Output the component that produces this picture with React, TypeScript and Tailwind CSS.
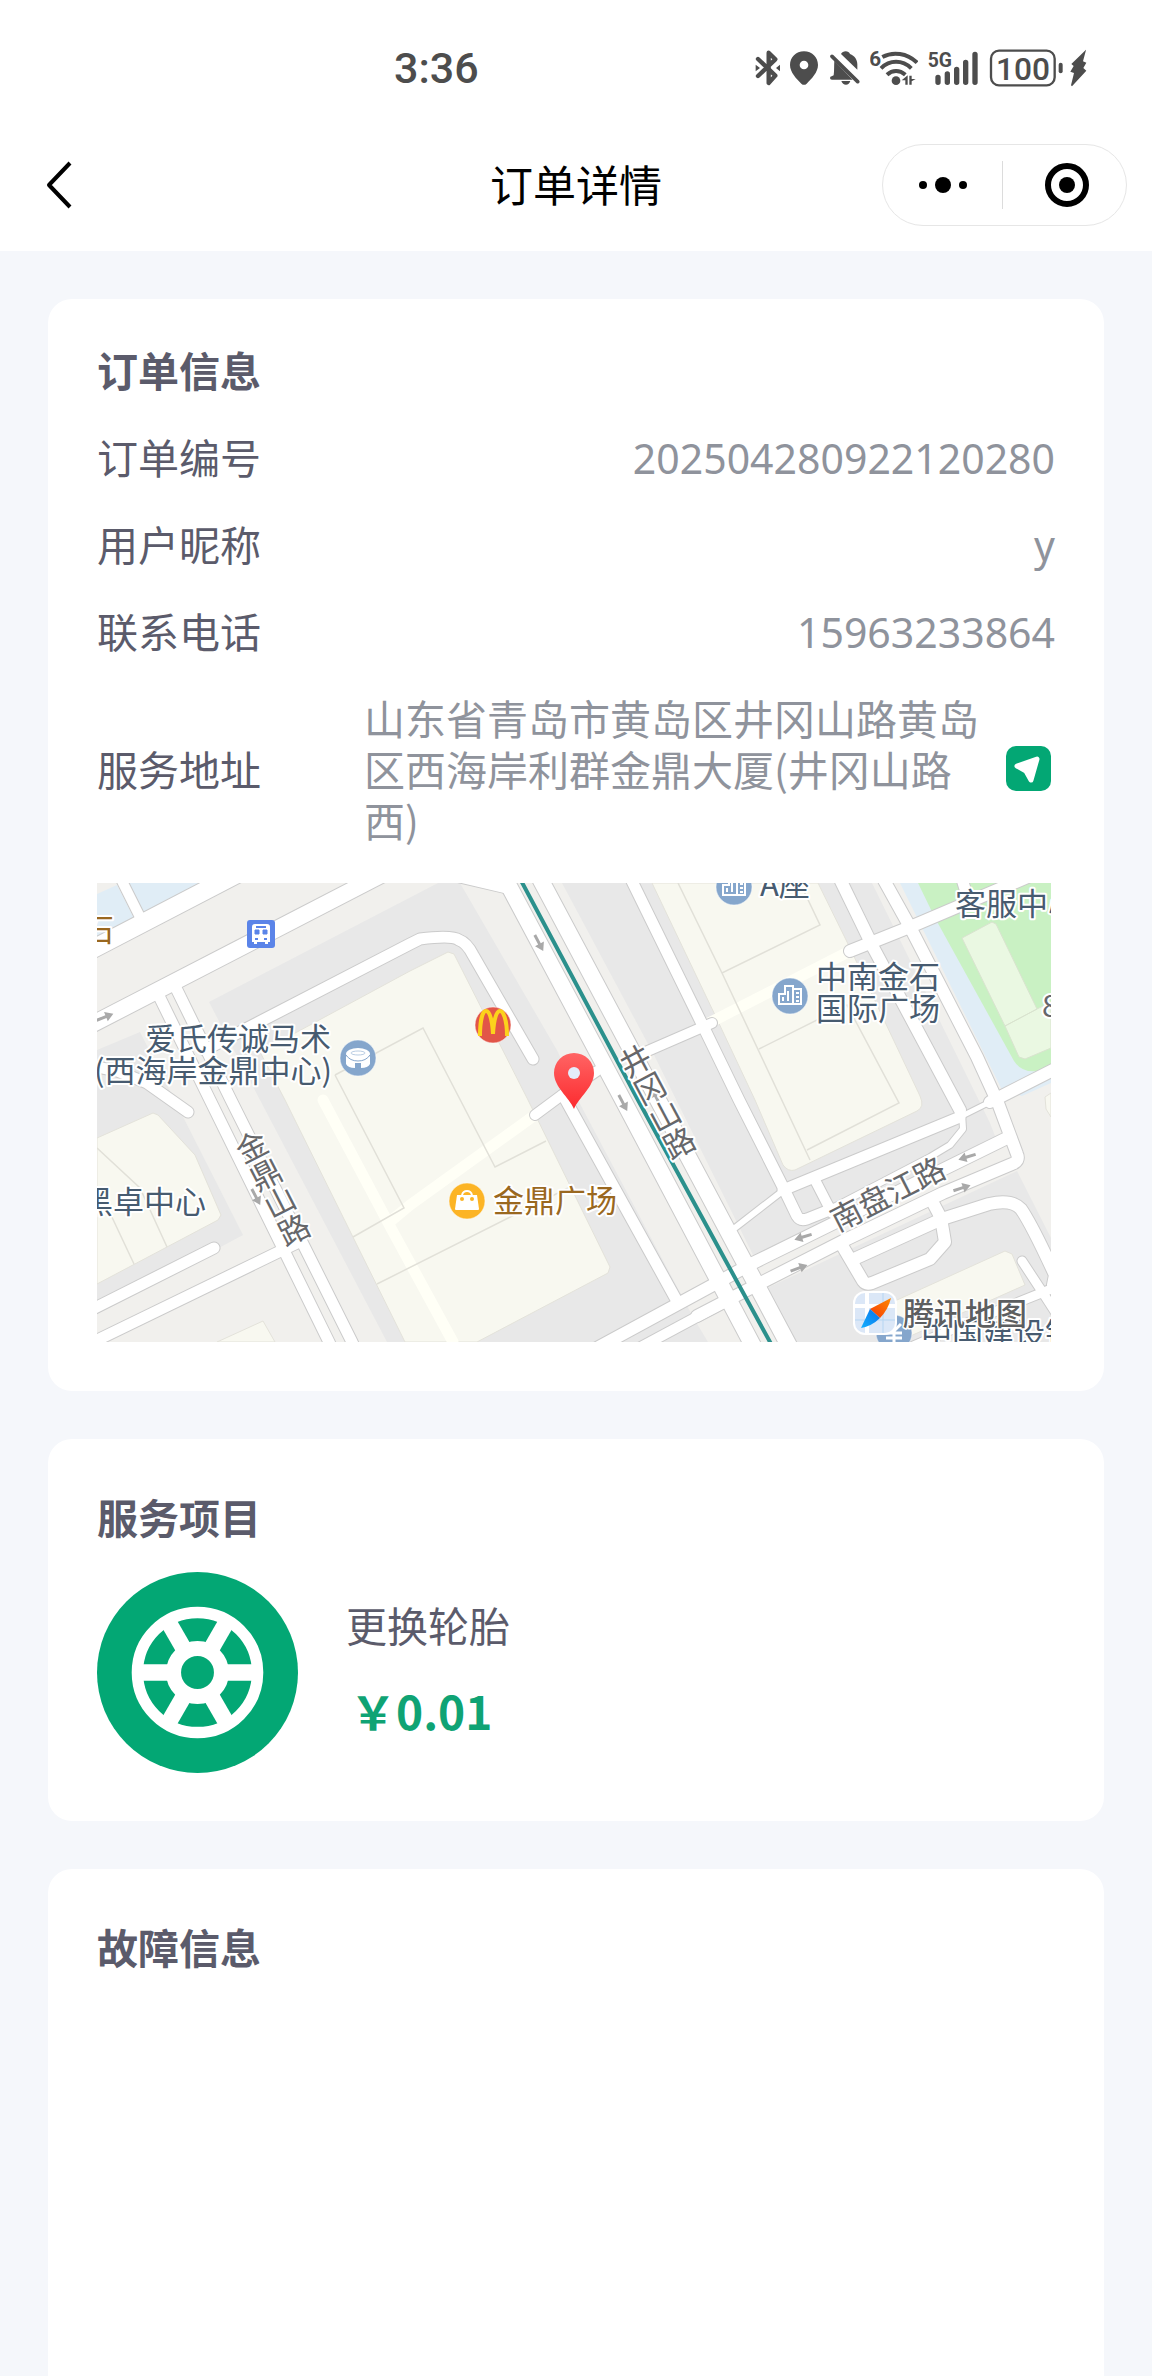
import { ReactNode } from "react";

const styleCard = "rounded-3xl bg-white px-[49px]";
const styleTitle = "text-[41px] font-bold text-[#5b5b6b]";
const styleLabel = "shrink-0 text-[41px] leading-[51px] text-[#5b5b6b]";
const styleValue =
  "text-[41px] leading-[51px] text-[#8f939c] font-['Noto_Sans','Noto_Sans_CJK_SC',sans-serif]";

const orderRows = [
  { label: "订单编号", value: "202504280922120280" },
  { label: "用户昵称", value: "y" },
  { label: "联系电话", value: "15963233864" },
];

function StatusBar() {
  return (
    <div className="flex h-[136px] items-center justify-between pl-[394px] pr-[65px] text-[#4d4d4d]">
      <span className="font-['Roboto',sans-serif] text-[43px] font-medium leading-none">
        3:36
      </span>
      <div className="flex items-center gap-[10px]">
        {/* bluetooth */}
        <svg width="25" height="38" viewBox="75 55 75 114" fill="none" stroke="currentColor" strokeWidth="13" strokeLinecap="round" strokeLinejoin="round">
          <path d="M84 85l52 50-20 22V66l20 20-52 50" />
          <path d="M77 102v20l13-10zM150 102v20l-12-10z" fill="currentColor" stroke="none" />
        </svg>
        {/* location */}
        <svg width="29" height="38" viewBox="180 55 87 114" fill="currentColor" fillRule="evenodd">
          <path d="M222 62c24 0 42 18 42 41 0 22-20 42-34 56q-8 7-16 0c-14-14-34-34-34-56 0-23 18-41 42-41zm0 28a13 13 0 100 26 13 13 0 000-26z" />
        </svg>
        {/* muted bell */}
        <svg width="31" height="38" viewBox="297 55 93 114" fill="currentColor">
          <path d="M333 70c3-5 8-8 14-8s11 3 13 8c14 5 22 17 22 31v16zM313 90l55 57h-62q-6 0-6-5 0-4 5-5l6-3c2-14 1-30 2-44zM334 151h27c-2 7-7 11-13 11s-12-4-14-11z" />
          <path d="M306 77l77 76" stroke="currentColor" strokeWidth="11" strokeLinecap="round" />
        </svg>
        {/* wifi 6 */}
        <svg width="48" height="38" viewBox="420 55 144 114" fill="none" stroke="currentColor" strokeWidth="12">
          <text x="418" y="105" fill="currentColor" stroke="none" fontSize="62" fontFamily="Roboto, sans-serif" fontWeight="700">6</text>
          <path d="M457 79c32-17 74-12 104 17M453 113c26-26 64-26 91 0M471 132c16-15 38-15 55 0" />
          <circle cx="498" cy="150" r="13" fill="currentColor" stroke="none" />
          <path d="M515 149l18-15v28h-7v-13zM538 135v27h7v-10l12-7h-12v-10z" fill="currentColor" stroke="none" />
        </svg>
        {/* 5G signal */}
        <svg width="51" height="38" viewBox="594 55 153 114" fill="none" stroke="currentColor" strokeWidth="16" strokeLinecap="round">
          <text x="593" y="110" fill="currentColor" stroke="none" fontSize="58" fontFamily="Roboto, sans-serif" fontWeight="700">5G</text>
          <path d="M624 140v15M652 130v25M680 116v39M707 95v60M735 71v84" />
        </svg>
        {/* battery, charging */}
        <svg width="98" height="38" viewBox="777 55 294 114" fill="none" stroke="currentColor">
          <rect x="783" y="60" width="191" height="104" rx="24" strokeWidth="7" />
          <text x="879" y="147" fill="currentColor" stroke="none" textAnchor="middle" fontSize="95" fontFamily="Roboto, sans-serif" fontWeight="500">100</text>
          <path d="M992 102v20" strokeWidth="12" strokeLinecap="round" />
          <path d="M1068 57l-44 43 7 6-10 17 11 4-9 37 3 3 43-47-9-8 9-16-10-4 9-34z" fill="currentColor" stroke="none" />
        </svg>
      </div>
    </div>
  );
}

function NavBar() {
  return (
    <div className="grid h-[98px] grid-cols-3 items-center px-[25px]">
      <button aria-label="返回" className="justify-self-start pl-5">
        <svg width="28" height="48" viewBox="0 0 28 48" fill="none" stroke="#000" strokeWidth="4" strokeLinejoin="round">
          <path d="M25 2L4 24l21 22" />
        </svg>
      </button>
      <h1 className="pb-1 text-center text-[43px] leading-[60px] text-black">
        订单详情
      </h1>
      <div className="flex h-[82px] w-[245px] items-center justify-self-end rounded-full border border-[#e6e6e6]">
        <button aria-label="更多" className="flex h-12 flex-1 items-center justify-center border-r border-[#dcdcdc]">
          <svg width="48" height="16" viewBox="0 0 48 16">
            <circle cx="4" cy="8" r="4" />
            <circle cx="24" cy="8" r="8" />
            <circle cx="44" cy="8" r="4" />
          </svg>
        </button>
        <button aria-label="关闭" className="flex h-12 flex-1 items-center justify-center pl-1">
          <svg width="46" height="46" viewBox="0 0 46 46">
            <circle cx="23" cy="23" r="19" fill="none" stroke="#000" strokeWidth="6" />
            <circle cx="23" cy="23" r="8" />
          </svg>
        </button>
      </div>
    </div>
  );
}

// d = centre line, w = width of the white part
const roads = [
  { d: "M-10 69L142-10", w: 18 },
  { d: "M24-4L45 38", w: 10 },
  { d: "M-10 144L288-10", w: 16 },
  { d: "M62 113L113 217 232 459 240 476", w: 11 },
  { d: "M79 105L134 217 255 459 263 476", w: 11 },
  { d: "M108 167L313 61 323 56Q355 52 362 57 370 60 376 72L436 176", w: 11 },
  { d: "M-10 182L20 188 50 200 91 229", w: 11 },
  { d: "M-10 429L117 365", w: 11 },
  { d: "M-10 462L200 360", w: 11 },
  { d: "M350-8L410 6", w: 9 },
  { d: "M405-10L526 217 663 476", w: 16 },
  { d: "M440-10L690 459 700 478", w: 16 },
  { d: "M531-10L608 147 642 217 686 304 700 333Q703 338 710 336L735 326", w: 11 },
  { d: "M546 170L615 140", w: 10 },
  { d: "M753 68L813 44 940-10", w: 12 },
  { d: "M740-10L777 66 863 227", w: 12 },
  { d: "M783-10L813 44 880 174 901 220 920 271Q923 278 915 281L846 310 746 358 650 407 600 433", w: 12 },
  { d: "M863-10L870 12", w: 11 },
  { d: "M686 307L720 293 863 234", w: 11 },
  { d: "M863 234L893 219", w: 5 },
  { d: "M893 219L964 183", w: 12 },
  { d: "M718 297L735 330", w: 10 },
  { d: "M634 348L683 310", w: 6 },
  { d: "M735 325L833 274 853 262 866 246 865 230", w: 6 },
  { d: "M910 255L656 380 616 402 500 465", w: 12 },
  { d: "M650 407L542 465", w: 10 },
  { d: "M746 364L766 398Q769 402 775 400L833 376 848 359 844 335 835 318", w: 12 },
  { d: "M757 376L845 336 892 321Q915 316 924 326 935 342 958 392L956 402", w: 12 },
  { d: "M925 378L946 410 964 438", w: 9 },
  { d: "M964 402L870 440 800 470", w: 9 },
  { d: "M438 232L465 212 500 188", w: 10 },
  { d: "M466 212L581 420", w: 11 },
];

const blocks = [
  "M112 119L341 0H363L461 169 481 217 596 434 611 459H290L163 217Z",
  "M0 167L43 149 146 352 0 430Z",
  "M465 0H775L893 240 900 258 658 376 558 174Z",
  "M668 406L920 288 954 355V459H698Z",
];

const buildings = [
  "M163 169L313 88 351 69 357 71 431 217 513 384 511 390 380 459H308L188 217Z",
  "M0 255L56 230 61 232 98 272 124 332 121 337 0 401Z",
  "M120 459L166 438 178 459Z",
  "M555 0L618 132 658 217 686 282Q691 289 698 287L820 228Q828 224 823 213L753 65 721 0Z",
  "M780 430L800 417 908 368 915 371 928 402 800 459Z",
  "M948 214L954 210V234L949 226Z",
];

const buildingLines =
  "M238 192L326 145 398 284 449 258M238 192L307 325 256 354M280 401L473 304M0 265L43 305 70 364M13 330L37 381M703 0L723 42 625 90 581 0M625 90L713 277M662 166L750 122 802 220 710 267";

function Arrow({ x, y, angle }: { x: number; y: number; angle: number }) {
  return (
    <path
      d="M-9-1.5H1V-5L9 0 1 5V1.5H-9Z"
      fill="#a9a9a9"
      transform={`translate(${x} ${y}) rotate(${angle})`}
    />
  );
}

function Poi({ x, y, color, children }: { x: number; y: number; color: string; children: ReactNode }) {
  return (
    <g transform={`translate(${x} ${y})`}>
      <circle r="18" fill={color} stroke="#fff" strokeOpacity="0.5" />
      {children}
    </g>
  );
}

function CityGlyph() {
  return (
    <g fill="none" stroke="#fff" strokeWidth="2">
      <path d="M-11 8V-2H-5V-10H3V8M3-7H11V8H-12" />
      <path d="M-7 5V1M-2 5V-5M6-3h3M6 1h3M6 5h3" />
    </g>
  );
}

function MapView() {
  return (
    <svg
      viewBox="0 0 954 459"
      className="mr-1 mt-0.5 block overflow-hidden font-['Noto_Sans_CJK_SC',sans-serif]"
      role="img"
      aria-label="地图">
      <rect width="954" height="459" fill="#f1f0ed" />
      <path d="M0 11L20 2 37 35 0 54ZM31 0H105L47 29Z" fill="#e0edf6" />
      {blocks.map((d) => (
        <path key={d} d={d} fill="#e8e8e8" />
      ))}
      <path d="M803 0H825L918 176 954 180V200L925 213 905 207Z" fill="#e0edf6" />
      <path d="M821 0H954V182L940 188Q925 190 917 178L838 35Z" fill="#c9f1c3" />
      <path
        d="M865 55L895 39 899 41 940 126 908 143ZM908 143L940 126 954 119V165L928 176 922 174Z"
        fill="#eaf8e2"
        stroke="#d9e3cf"
        strokeLinejoin="round"
      />
      {buildings.map((d) => (
        <path key={d} d={d} fill="#f8f8f0" stroke="#e3e2da" strokeLinejoin="round" />
      ))}
      <path d="M226 217L295 347 356 459M295 337L313 322 438 232M608 142L755 67" fill="none" stroke="#fffff6" strokeWidth="11" strokeLinecap="round" />
      <path d={buildingLines} fill="none" stroke="#e1e0d8" strokeWidth="1.5" />

      {/* the outlines go under every road so that the crossings stay open */}
      <g fill="none" stroke="#cbcbcb" strokeLinecap="round" strokeLinejoin="round">
        {roads.map((r) => (
          <path key={r.d} d={r.d} strokeWidth={r.w + 2} />
        ))}
      </g>
      <g fill="none" stroke="#fff" strokeLinecap="round" strokeLinejoin="round">
        {roads.map((r) => (
          <path key={r.d} d={r.d} strokeWidth={r.w} />
        ))}
      </g>
      <path d="M420-10L541 217 673 459 682 476" fill="none" stroke="#2b908c" strokeWidth="4" />

      <Arrow x={8} y={134} angle={-22} />
      <Arrow x={442} y={60} angle={62} />
      <Arrow x={526} y={220} angle={62} />
      <Arrow x={559} y={214} angle={-118} />
      <Arrow x={159} y={314} angle={62} />
      <Arrow x={870} y={274} angle={163} />
      <Arrow x={865} y={305} angle={-18} />
      <Arrow x={706} y={354} angle={163} />
      <Arrow x={702} y={385} angle={-20} />

      <g fontSize="31" fill="#66676a" stroke="#fff" strokeWidth="4" strokeLinejoin="round" paintOrder="stroke">
        <text x="0 0 0 0" y="0 31 62 93" textAnchor="middle" transform="translate(544 188) rotate(-28)">
          井冈山路
        </text>
        <text x="0 0 0 0" y="0 31 62 93" textAnchor="middle" transform="translate(160 274) rotate(-27)">
          金鼎山路
        </text>
        <text textAnchor="middle" transform="translate(796 321) rotate(-27)">
          南盘江路
        </text>
        <text x="945" y="134">8</text>
      </g>

      {/* bus stop */}
      <g transform="translate(164 51)">
        <rect x="-14" y="-14" width="28" height="28" rx="3" fill="#5b84e8" />
        <path d="M-9-7Q-9-10-6-10H6Q9-10 9-7V8H7V10H4V8H-4V10H-7V8H-9Z" fill="#fff" />
        <path d="M-6-4H-2V0H-6ZM2-4H6V0H2Z" fill="#5b84e8" stroke="#5b84e8" />
        <path d="M-5-7H5M-6 5h3M3 5h3" stroke="#5b84e8" strokeWidth="2" />
      </g>
      <Poi x={261} y={175} color="#85a6cc">
        <path d="M-12-2V6Q-10 10-3 10V5H3V10Q10 10 12 6V-2Q0 4-12-2Z" fill="#fff" />
        <ellipse cy="-4" rx="12" ry="6" fill="#fff" />
        <path d="M-12-3Q-8 3 0 3T12-3" fill="none" stroke="#85a6cc" />
        <ellipse cy="-5" rx="7" ry="2" fill="none" stroke="#b9cde3" />
      </Poi>
      <Poi x={637} y={4} color="#85a6cc">
        <CityGlyph />
      </Poi>
      <Poi x={693} y={113} color="#85a6cc">
        <CityGlyph />
      </Poi>
      <Poi x={396} y={142} color="#e25548">
        <path d="M-13 11C-13-6-10-14-7-14S-1-8 0 9C1-8 4-14 7-14S14-6 14 11" fill="none" stroke="#fcd21c" strokeWidth="4" />
      </Poi>
      <Poi x={370} y={318} color="#fcb425">
        <path d="M-10-6H10L12 8Q12 9 11 9H-11Q-12 9-12 8Z" fill="#fff" />
        <path d="M-5-6Q-4-10 0-10T5-6" fill="none" stroke="#fff" strokeWidth="2" />
        <circle cx="-5" cy="-2" r="2" fill="#fcb425" />
        <circle cx="5" cy="-2" r="2" fill="#fcb425" />
      </Poi>
      <Poi x={797} y={450} color="#85a6cc">
        <path d="M-7-9L0-2 7-9M-8 0H8M-8 5H8M0-2V12" fill="none" stroke="#fff" strokeWidth="3" />
      </Poi>

      <g fontSize="31" fill="#475b70" stroke="#fff" strokeWidth="4" strokeLinejoin="round" paintOrder="stroke">
        <text x="234" y="167" textAnchor="end">爱氏传诚马术</text>
        <text x="235" y="199" textAnchor="end">(西海岸金鼎中心)</text>
        <text x="109" y="330" textAnchor="end">黑卓中心</text>
        <text x="663" y="13">A座</text>
        <text x="719" y="105">中南金石</text>
        <text x="719" y="137">国际广场</text>
        <text x="858" y="32">客服中心</text>
        <text x="824" y="462">中国建设银行</text>
        <text x="17" y="58" textAnchor="end" fill="#9a6820">石</text>
        <text x="396" y="329" fill="#9a6820">金鼎广场</text>
      </g>

      {/* current position */}
      <path d="M477 226C472 214 457 204 457 190A20 20 0 01497 190C497 204 482 214 477 226Z" fill="url(#pin)" />
      <circle cx="477" cy="190" r="6" fill="#e4ecfb" />
      <defs>
        <linearGradient id="pin" x1="0" y1="0" x2="0" y2="1">
          <stop offset="0" stopColor="#ff6464" />
          <stop offset="1" stopColor="#fc2b2f" />
        </linearGradient>
        <linearGradient id="north" x1="1" y1="0" x2="0" y2="1">
          <stop offset="0" stopColor="#ff8a00" />
          <stop offset="1" stopColor="#f53a08" />
        </linearGradient>
        <linearGradient id="south" x1="1" y1="0" x2="0" y2="1">
          <stop offset="0" stopColor="#0a70e8" />
          <stop offset="1" stopColor="#12b0ff" />
        </linearGradient>
      </defs>

      {/* provider logo */}
      <g transform="translate(756 408)">
        <rect width="44" height="44" rx="12" fill="#fff" />
        <rect x="2" y="2" width="40" height="40" rx="10" fill="#dbe7f7" />
        <path d="M14 2V42M2 15H42" stroke="#fff" strokeWidth="4" />
        <path d="M30 2V42M2 29H42" stroke="#b5d5f2" />
        <path d="M38 7L17 18 27 27Q35 19 38 7Z" fill="url(#north)" />
        <path d="M8 37L17 18 27 27Q19 35 8 37Z" fill="url(#south)" />
      </g>
      <text x="806" y="442" fontSize="31" fontWeight="500" fill="#5c5e60" stroke="#fff" strokeWidth="3" strokeLinejoin="round" paintOrder="stroke">
        腾讯地图
      </text>
    </svg>
  );
}

function WheelIcon() {
  return (
    <svg className="size-[201px] shrink-0" viewBox="-281 -281 562 562">
      <circle r="281" fill="#03a774" />
      <circle r="168" fill="none" stroke="#fff" strokeWidth="32" />
      <g stroke="#fff" strokeWidth="46">
        <path d="M-160 0H160" />
        <path d="M-160 0H160" transform="rotate(60)" />
        <path d="M-160 0H160" transform="rotate(120)" />
      </g>
      <circle r="67" fill="#03a774" stroke="#fff" strokeWidth="42" />
    </svg>
  );
}

export default function App() {
  return (
    <div className="flex min-h-screen flex-col bg-[#f5f7fb] font-['Noto_Sans_CJK_SC',sans-serif]">
      <header className="bg-white pb-[17px]">
        <StatusBar />
        <NavBar />
      </header>

      <main className="flex grow flex-col gap-12 px-12 pt-12">
        <section className={`${styleCard} flex flex-col gap-9 pb-[49px] pt-[45px]`}>
          <h2 className={`${styleTitle} leading-[51px]`}>订单信息</h2>
          {orderRows.map((row) => (
            <div key={row.label} className="flex h-[51px] items-baseline justify-between">
              <span className={styleLabel}>{row.label}</span>
              <span className={styleValue}>{row.value}</span>
            </div>
          ))}
          <div className="flex items-center">
            <span className={styleLabel}>服务地址</span>
            <p className="ml-[103px] mr-5 flex-1 text-[41px] leading-[51px] text-[#8f939c]">
              山东省青岛市黄岛区井冈山路黄岛区西海岸利群金鼎大厦(井冈山路西)
            </p>
            <button aria-label="导航" className="mr-1 shrink-0">
              <svg width="45" height="45" viewBox="0 0 45 45">
                <rect width="45" height="45" rx="10" fill="#03a774" />
                <path d="M11 20L31 13 25 34 20 25Z" fill="#fff" stroke="#fff" strokeWidth="5" strokeLinejoin="round" />
              </svg>
            </button>
          </div>
          <MapView />
        </section>

        <section className={`${styleCard} py-12`}>
          <h2 className={`${styleTitle} mb-[27px] leading-[58px]`}>服务项目</h2>
          <div className="flex items-center gap-12">
            <WheelIcon />
            <div className="flex flex-col gap-7 pb-3">
              <p className="text-[41px] leading-[58px] text-[#5b5b6b]">更换轮胎</p>
              <p className="pl-1 text-[46px] font-bold leading-[58px] text-[#0fa374]">￥0.01</p>
            </div>
          </div>
        </section>

        <section className={`${styleCard} grow rounded-b-none pt-12`}>
          <h2 className={`${styleTitle} leading-[58px]`}>故障信息</h2>
        </section>
      </main>
    </div>
  );
}
